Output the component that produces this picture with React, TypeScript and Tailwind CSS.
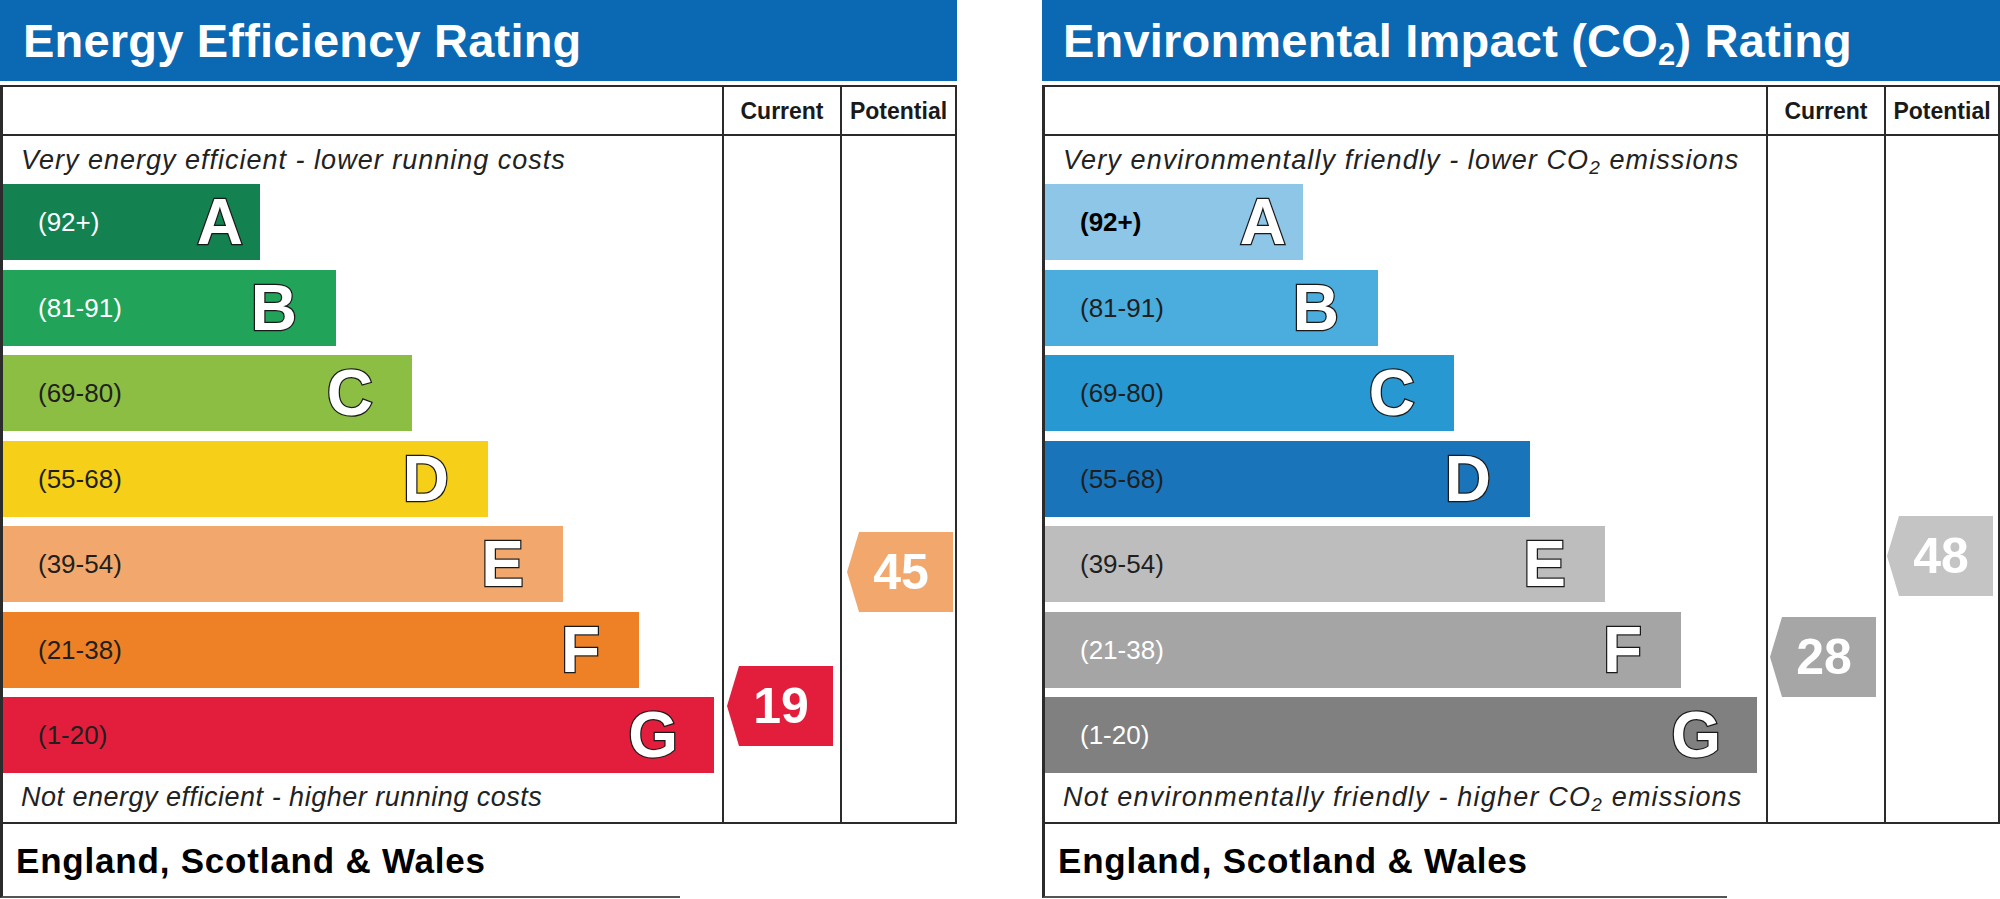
import type { ReactNode } from 'react'

type Band = {
  letter: string
  range: string
  width: number
  bg: string
  label: string
  pr: string
}

type Marker = {
  value: number
  top: number
  left: number
  bg: string
}

const energyBands: Band[] = [
  { letter: 'A', range: '(92+)', width: 257, bg: 'bg-[#138150]', label: 'text-white', pr: 'pr-[17px]' },
  { letter: 'B', range: '(81-91)', width: 333, bg: 'bg-[#21a459]', label: 'text-white', pr: 'pr-[39px]' },
  { letter: 'C', range: '(69-80)', width: 409, bg: 'bg-[#8cbe43]', label: 'text-[#1f1f1f]', pr: 'pr-[39px]' },
  { letter: 'D', range: '(55-68)', width: 485, bg: 'bg-[#f6d018]', label: 'text-[#1f1f1f]', pr: 'pr-[39px]' },
  { letter: 'E', range: '(39-54)', width: 560, bg: 'bg-[#f2a86c]', label: 'text-[#1f1f1f]', pr: 'pr-[39px]' },
  { letter: 'F', range: '(21-38)', width: 636, bg: 'bg-[#ee8126]', label: 'text-[#1f1f1f]', pr: 'pr-[39px]' },
  { letter: 'G', range: '(1-20)', width: 711, bg: 'bg-[#e31e3d]', label: 'text-[#1f1f1f]', pr: 'pr-[36px]' },
]

const co2Bands: Band[] = [
  { letter: 'A', range: '(92+)', width: 258, bg: 'bg-[#8ec6e8]', label: 'text-black font-bold', pr: 'pr-[17px]' },
  { letter: 'B', range: '(81-91)', width: 333, bg: 'bg-[#4badde]', label: 'text-[#1f1f1f]', pr: 'pr-[39px]' },
  { letter: 'C', range: '(69-80)', width: 409, bg: 'bg-[#2898d2]', label: 'text-[#1f1f1f]', pr: 'pr-[39px]' },
  { letter: 'D', range: '(55-68)', width: 485, bg: 'bg-[#1a74b9]', label: 'text-[#1f1f1f]', pr: 'pr-[39px]' },
  { letter: 'E', range: '(39-54)', width: 560, bg: 'bg-[#bdbdbd]', label: 'text-[#1f1f1f]', pr: 'pr-[39px]' },
  { letter: 'F', range: '(21-38)', width: 636, bg: 'bg-[#a5a5a5]', label: 'text-white', pr: 'pr-[39px]' },
  { letter: 'G', range: '(1-20)', width: 712, bg: 'bg-[#808080]', label: 'text-white', pr: 'pr-[36px]' },
]

function Sub2({ className }: { className: string }) {
  return <span className={`relative ${className}`}>2</span>
}

function Arrow({ marker }: { marker: Marker }) {
  return (
    <div
      className={`absolute flex h-[80px] w-[106px] items-center justify-center ${marker.bg} [clip-path:polygon(12px_0,100%_0,100%_100%,12px_100%,0_50%)]`}
      style={{ top: marker.top, left: marker.left }}
    >
      <span className="pl-[2px] text-[50px] font-bold leading-none text-white">{marker.value}</span>
    </div>
  )
}

function RatingBar({ band }: { band: Band }) {
  return (
    <div
      className={`flex h-[76px] items-center justify-between pl-[35px] ${band.pr} ${band.bg}`}
      style={{ width: band.width }}
    >
      <span className={`text-[26px] leading-none ${band.label}`}>{band.range}</span>
      <span className="text-[64px] font-bold leading-none text-white [-webkit-text-stroke:2.5px_#1a1a1a] [paint-order:stroke_fill]">
        {band.letter}
      </span>
    </div>
  )
}

function Panel({
  title,
  titlePad,
  topText,
  bottomText,
  bands,
  current,
  potential,
  width,
  chartWidth,
  footerWidth,
}: {
  title: ReactNode
  titlePad: string
  topText: ReactNode
  bottomText: ReactNode
  bands: Band[]
  current: Marker
  potential: Marker
  width: number
  chartWidth: number
  footerWidth: number
}) {
  return (
    <div className="flex shrink-0 flex-col" style={{ width }}>
      <div className={`flex h-[81px] items-center bg-[#0a69b2] ${titlePad}`}>
        <h1 className="text-[47px] font-bold leading-none tracking-[0.2px] text-white">{title}</h1>
      </div>

      <div className="mt-[4px] flex border-t-2 border-r-2 border-b-2 border-l-[3px] border-[#2b2b2b]">
        <div className="flex shrink-0 flex-col border-r-2 border-[#2b2b2b]" style={{ width: chartWidth }}>
          <div className="h-[49px] border-b-2 border-[#2b2b2b]" />
          <div className="flex h-[686px] flex-col">
            <div className="flex h-[49px] items-center pl-[18px] text-[27px] italic leading-none text-[#222]">
              {topText}
            </div>
            <div className="flex flex-col gap-[9.5px]">
              {bands.map(b => (
                <RatingBar key={b.letter} band={b} />
              ))}
            </div>
            <div className="flex h-[50px] items-center pl-[18px] text-[27px] italic leading-none text-[#222]">
              {bottomText}
            </div>
          </div>
        </div>

        <div className="flex w-[118px] shrink-0 flex-col border-r-2 border-[#2b2b2b]">
          <div className="flex h-[49px] items-center justify-center border-b-2 border-[#2b2b2b] pt-[2px] text-[23px] font-bold leading-none text-[#1a1a1a]">
            Current
          </div>
          <div className="relative flex-1">
            <Arrow marker={current} />
          </div>
        </div>

        <div className="flex flex-1 flex-col">
          <div className="flex h-[49px] items-center justify-center border-b-2 border-[#2b2b2b] pt-[2px] text-[23px] font-bold leading-none text-[#1a1a1a]">
            Potential
          </div>
          <div className="relative flex-1">
            <Arrow marker={potential} />
          </div>
        </div>
      </div>

      <div
        className="flex h-[74px] items-center border-b-2 border-l-[3px] border-[#2b2b2b] border-b-[#555] pl-[13px]"
        style={{ width: footerWidth }}
      >
        <span className="text-[35px] font-bold leading-none tracking-[0.8px] text-black">
          England, Scotland &amp; Wales
        </span>
      </div>
    </div>
  )
}

export default function App() {
  return (
    <div className="flex h-[899px] w-[2000px] gap-[85px] overflow-hidden bg-white [font-family:Liberation_Sans,Arial,sans-serif]">
      <Panel
        title="Energy Efficiency Rating"
        titlePad="pl-[23px]"
        topText={<span className="tracking-[1px]">Very energy efficient - lower running costs</span>}
        bottomText={<span className="tracking-[0.5px]">Not energy efficient - higher running costs</span>}
        bands={energyBands}
        current={{ value: 19, top: 530, left: 3, bg: 'bg-[#e31e3d]' }}
        potential={{ value: 45, top: 396, left: 5, bg: 'bg-[#f2a86c]' }}
        width={957}
        chartWidth={721}
        footerWidth={680}
      />
      <Panel
        title={
          <>
            Environmental Impact (CO<Sub2 className="top-[8px] text-[31px]" />) Rating
          </>
        }
        titlePad="pl-[21px]"
        topText={
          <span className="tracking-[1.1px]">
            Very environmentally friendly - lower CO<Sub2 className="top-[5px] text-[19px]" /> emissions
          </span>
        }
        bottomText={
          <span className="tracking-[1.2px]">
            Not environmentally friendly - higher CO<Sub2 className="top-[5px] text-[19px]" /> emissions
          </span>
        }
        bands={co2Bands}
        current={{ value: 28, top: 481, left: 2, bg: 'bg-[#a6a6a6]' }}
        potential={{ value: 48, top: 380, left: 1, bg: 'bg-[#c4c4c4]' }}
        width={958}
        chartWidth={723}
        footerWidth={685}
      />
    </div>
  )
}
